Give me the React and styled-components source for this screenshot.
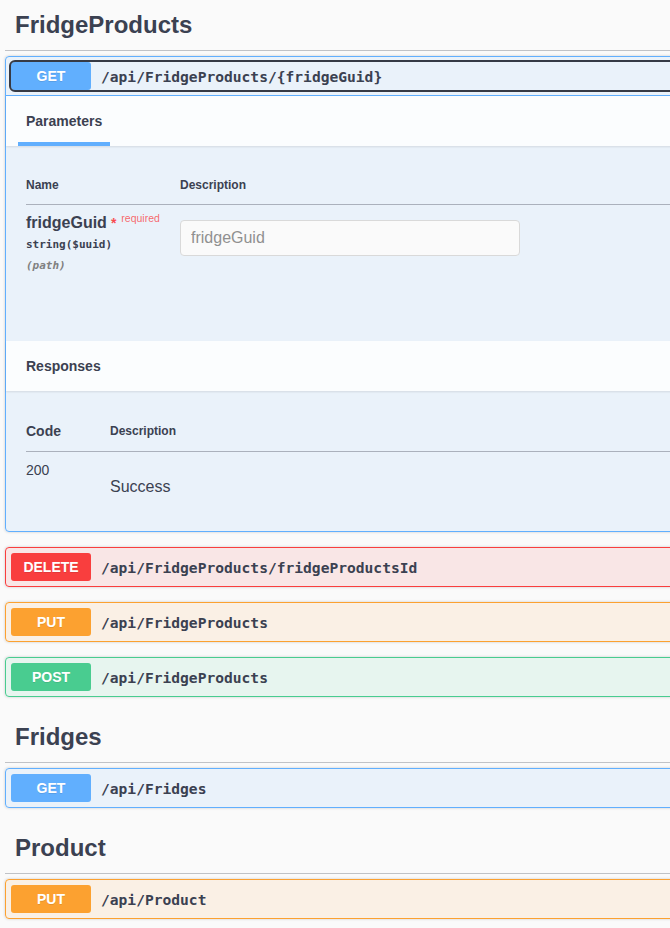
import React from "react";
import styled, { createGlobalStyle, css } from "styled-components";

const GlobalStyle = createGlobalStyle`
  html, body {
    margin: 0;
    padding: 0;
    background: #fafafa;
    overflow: hidden;
  }
  body {
    font-family: "Liberation Sans", Arial, sans-serif;
    color: #3b4151;
  }
`;

const METHODS = {
  GET: { c: "#61affe", bg: "rgba(97,175,254,.1)" },
  DELETE: { c: "#f93e3e", bg: "rgba(249,62,62,.1)" },
  PUT: { c: "#fca130", bg: "rgba(252,161,48,.1)" },
  POST: { c: "#49cc90", bg: "rgba(73,204,144,.1)" },
};

const mono = `"DejaVu Sans Mono", "Liberation Mono", monospace`;

const Page = styled.div`
  width: 1100px;
  padding-left: 5px;
`;

const TagHeader = styled.h3`
  display: flex;
  align-items: center;
  margin: 0 0 5px;
  padding: 10px 20px 10px 10px;
  border-bottom: 1px solid rgba(59, 65, 81, 0.3);
  font-family: "Liberation Sans", Arial, sans-serif;
  font-size: 24px;
  font-weight: 700;
  line-height: 30px;
  color: #3b4151;
`;

const OpBlock = styled.div`
  margin: 0 0 15px;
  border: 1px solid ${(p) => METHODS[p.$m].c};
  background: ${(p) => METHODS[p.$m].bg};
  border-radius: 4px;
  box-shadow: 0 0 3px rgba(0, 0, 0, 0.19);
`;

const Summary = styled.div`
  display: flex;
  align-items: center;
  padding: 5px;
  ${(p) =>
    p.$open &&
    css`
      border-bottom: 1px solid ${METHODS[p.$m].c};
    `}
`;

const SummaryControl = styled.div`
  display: flex;
  align-items: center;
  flex: 1;
  border-radius: 4px;
  ${(p) =>
    p.$focused &&
    css`
      outline: 2px solid #363a45;
      outline-offset: 0px;
    `}
`;

const Method = styled.span`
  box-sizing: border-box;
  width: 80px;
  flex: none;
  padding: 6px 0;
  text-align: center;
  border-radius: 3px;
  background: ${(p) => METHODS[p.$m].c};
  color: #fff;
  font-family: "Liberation Sans", Arial, sans-serif;
  font-size: 14px;
  font-weight: 700;
  line-height: 16px;
  text-shadow: 0 1px 0 rgba(0, 0, 0, 0.1);
`;

const Path = styled.span`
  padding: 0 10px;
  font-family: ${mono};
  font-size: 14.6px;
  font-weight: 700;
  color: #3b4151;
`;

const SectionHeader = styled.div`
  display: flex;
  align-items: center;
  box-sizing: border-box;
  min-height: 50px;
  padding: 8px 20px;
  background: rgba(255, 255, 255, 0.8);
  box-shadow: 0 1px 2px rgba(0, 0, 0, 0.1);
`;

const SectionTitle = styled.h4`
  position: relative;
  margin: 0;
  font-size: 14px;
  font-weight: 700;
  line-height: 17px;
  color: #3b4151;
  ${(p) =>
    p.$active &&
    css`
      &::after {
        content: "";
        position: absolute;
        left: -10%;
        bottom: -16px;
        width: 120%;
        height: 4px;
        background: #61affe;
      }
    `}
`;

const ParamsBody = styled.div`
  padding: 20px 20px 57px;
`;

const ResponsesBody = styled.div`
  padding: 20px 20px 25px;
`;

const Table = styled.table`
  width: 100%;
  border-collapse: collapse;
  text-align: left;
`;

const Th = styled.th`
  padding: 12px 0;
  border-bottom: 1px solid rgba(59, 65, 81, 0.2);
  font-size: ${(p) => (p.$big ? "14px" : "12px")};
  font-weight: 700;
  line-height: ${(p) => (p.$big ? "16px" : "14px")};
  color: #3b4151;
  width: ${(p) => p.$w || "auto"};
  vertical-align: middle;
`;

const Td = styled.td`
  padding: 10px 10px 10px 0;
  vertical-align: top;
  color: #3b4151;
`;

const ParamName = styled.div`
  font-size: 16px;
  font-weight: 700;
  line-height: 16px;
  white-space: nowrap;
`;

const Star = styled.span`
  position: relative;
  color: rgba(255, 0, 0, 0.7);
  font-size: 14px;
  margin-left: 4px;
`;

const Required = styled.span`
  position: relative;
  top: -6px;
  margin-left: 5px;
  font-size: 10.5px;
  font-weight: 400;
  color: rgba(255, 0, 0, 0.6);
`;

const ParamType = styled.div`
  padding: 5px 0;
  font-family: ${mono};
  font-size: 11px;
  font-weight: 700;
  line-height: 16px;
`;

const ParamIn = styled.div`
  font-family: ${mono};
  font-size: 11px;
  font-style: italic;
  font-weight: 700;
  line-height: 16px;
  color: #808080;
`;

const Input = styled.input`
  box-sizing: border-box;
  display: block;
  width: 340px;
  height: 36px;
  margin-top: 5px;
  padding: 8px 10px;
  border: 1px solid #d9d9d9;
  border-radius: 4px;
  background: #fafafa;
  font-family: "Liberation Sans", Arial, sans-serif;
  font-size: 16px;
  color: #3b4151;
  &::placeholder {
    color: #909090;
  }
`;

const Code = styled.div`
  font-size: 14px;
  line-height: 16px;
`;

const ResponseText = styled.p`
  margin: 16px 0 0;
  font-size: 16px;
  line-height: 18px;
`;

function Op({ method, path }) {
  return (
    <OpBlock $m={method}>
      <Summary $m={method}>
        <SummaryControl>
          <Method $m={method}>{method}</Method>
          <Path>{path}</Path>
        </SummaryControl>
      </Summary>
    </OpBlock>
  );
}

export default function App() {
  return (
    <>
      <GlobalStyle />
      <Page>
        <TagHeader>FridgeProducts</TagHeader>
        <OpBlock $m="GET">
          <Summary $m="GET" $open>
            <SummaryControl $focused>
              <Method $m="GET">GET</Method>
              <Path>/api/FridgeProducts/{"{fridgeGuid}"}</Path>
            </SummaryControl>
          </Summary>
          <SectionHeader>
            <SectionTitle $active>Parameters</SectionTitle>
          </SectionHeader>
          <ParamsBody>
            <Table>
              <thead>
                <tr>
                  <Th $w="154px">Name</Th>
                  <Th>Description</Th>
                </tr>
              </thead>
              <tbody>
                <tr>
                  <Td>
                    <ParamName>
                      fridgeGuid<Star>*</Star>
                      <Required>required</Required>
                    </ParamName>
                    <ParamType>string($uuid)</ParamType>
                    <ParamIn>(path)</ParamIn>
                  </Td>
                  <Td>
                    <Input placeholder="fridgeGuid" readOnly />
                  </Td>
                </tr>
              </tbody>
            </Table>
          </ParamsBody>
          <SectionHeader>
            <SectionTitle>Responses</SectionTitle>
          </SectionHeader>
          <ResponsesBody>
            <Table>
              <thead>
                <tr>
                  <Th $w="84px" $big>
                    Code
                  </Th>
                  <Th>Description</Th>
                </tr>
              </thead>
              <tbody>
                <tr>
                  <Td>
                    <Code>200</Code>
                  </Td>
                  <Td>
                    <ResponseText>Success</ResponseText>
                  </Td>
                </tr>
              </tbody>
            </Table>
          </ResponsesBody>
        </OpBlock>
        <Op method="DELETE" path="/api/FridgeProducts/fridgeProductsId" />
        <Op method="PUT" path="/api/FridgeProducts" />
        <Op method="POST" path="/api/FridgeProducts" />

        <TagHeader>Fridges</TagHeader>
        <Op method="GET" path="/api/Fridges" />

        <TagHeader>Product</TagHeader>
        <Op method="PUT" path="/api/Product" />
      </Page>
    </>
  );
}
